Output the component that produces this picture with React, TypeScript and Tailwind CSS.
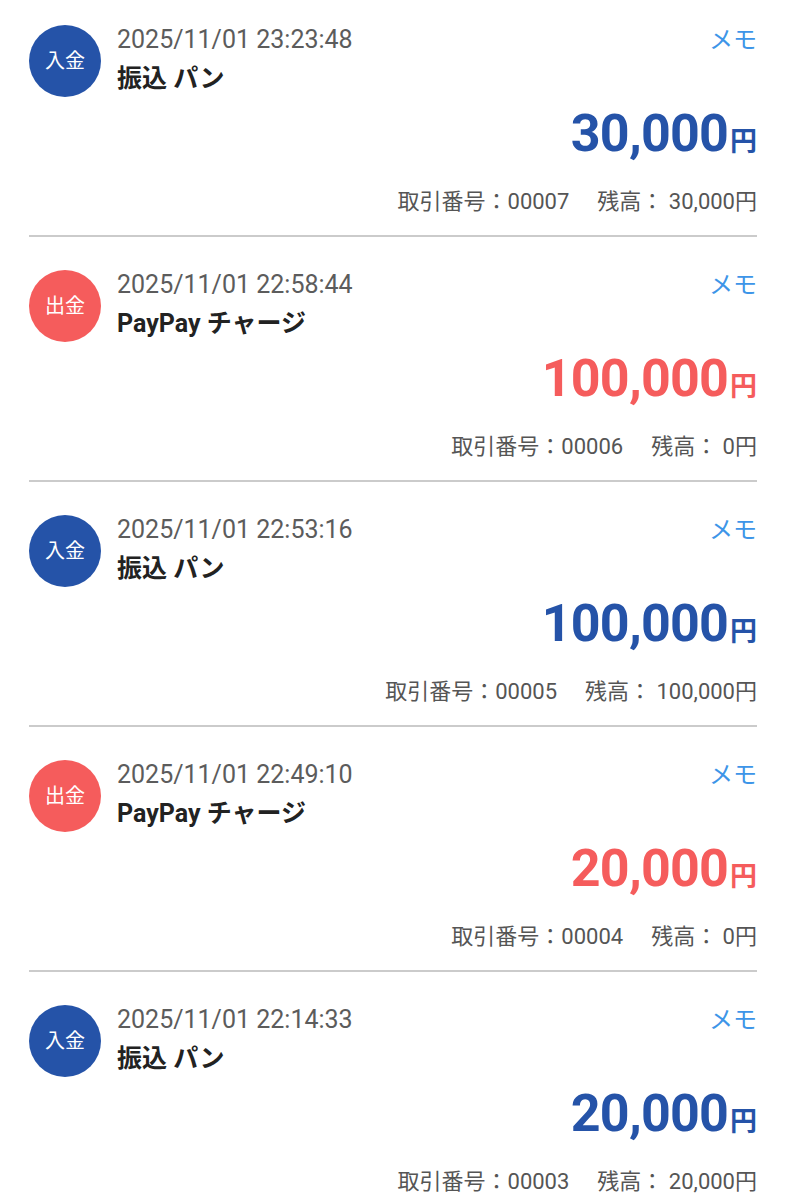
import React from 'react';

type Tx = {
  kind: 'in' | 'out';
  date: string;
  title: string;
  amount: string;
  no: string;
  balance: string;
};

const txs: Tx[] = [
  { kind: 'in', date: '2025/11/01 23:23:48', title: '振込 パン', amount: '30,000', no: '00007', balance: '30,000' },
  { kind: 'out', date: '2025/11/01 22:58:44', title: 'PayPay チャージ', amount: '100,000', no: '00006', balance: '0' },
  { kind: 'in', date: '2025/11/01 22:53:16', title: '振込 パン', amount: '100,000', no: '00005', balance: '100,000' },
  { kind: 'out', date: '2025/11/01 22:49:10', title: 'PayPay チャージ', amount: '20,000', no: '00004', balance: '0' },
  { kind: 'in', date: '2025/11/01 22:14:33', title: '振込 パン', amount: '20,000', no: '00003', balance: '20,000' },
];

const font = { fontFamily: "Roboto, 'Noto Sans CJK JP', sans-serif" };

const Row: React.FC<{ tx: Tx }> = ({ tx }) => {
  const isIn = tx.kind === 'in';
  return (
    <div className="flex gap-4 pt-[33px] pb-[19px] border-b-2 border-[#cbcbcb]">
      <div
        className={`w-[72px] h-[72px] shrink-0 rounded-full flex items-center justify-center text-white text-[20px] ${
          isIn ? 'bg-[#2553a8]' : 'bg-[#f55c5c]'
        }`}
      >
        {isIn ? '入金' : '出金'}
      </div>
      <div className="flex-1 flex flex-col">
        <div className="flex justify-between items-start">
          <div className="text-[25px] leading-[30px] text-[#5c5c5c]">{tx.date}</div>
          <div className="text-[24px] leading-[30px] text-[#3d95e8]">メモ</div>
        </div>
        <div className="mt-[9px] text-[25px] leading-[30px] font-bold text-[#222222]">{tx.title}</div>
        <div className={`mt-[10px] flex justify-end items-baseline ${isIn ? 'text-[#2553a8]' : 'text-[#f55c5c]'}`}>
          <span className="text-[52px] leading-[60px] font-bold tracking-[-0.8px]">{tx.amount}</span>
          <span className="ml-[2px] text-[27px] leading-[30px] font-bold">円</span>
        </div>
        <div className="mt-[24px] flex justify-end gap-[28px] text-[22px] leading-[28px] text-[#555555]">
          <span>取引番号：{tx.no}</span>
          <span>残高： {tx.balance}円</span>
        </div>
      </div>
    </div>
  );
};

export default function App() {
  return (
    <div className="bg-white w-[788px] h-[1200px] overflow-hidden" style={font}>
      <div className="pl-[29px] pr-[31px] -mt-[8px]">
        {txs.map((tx, i) => (
          <Row key={i} tx={tx} />
        ))}
      </div>
    </div>
  );
}
